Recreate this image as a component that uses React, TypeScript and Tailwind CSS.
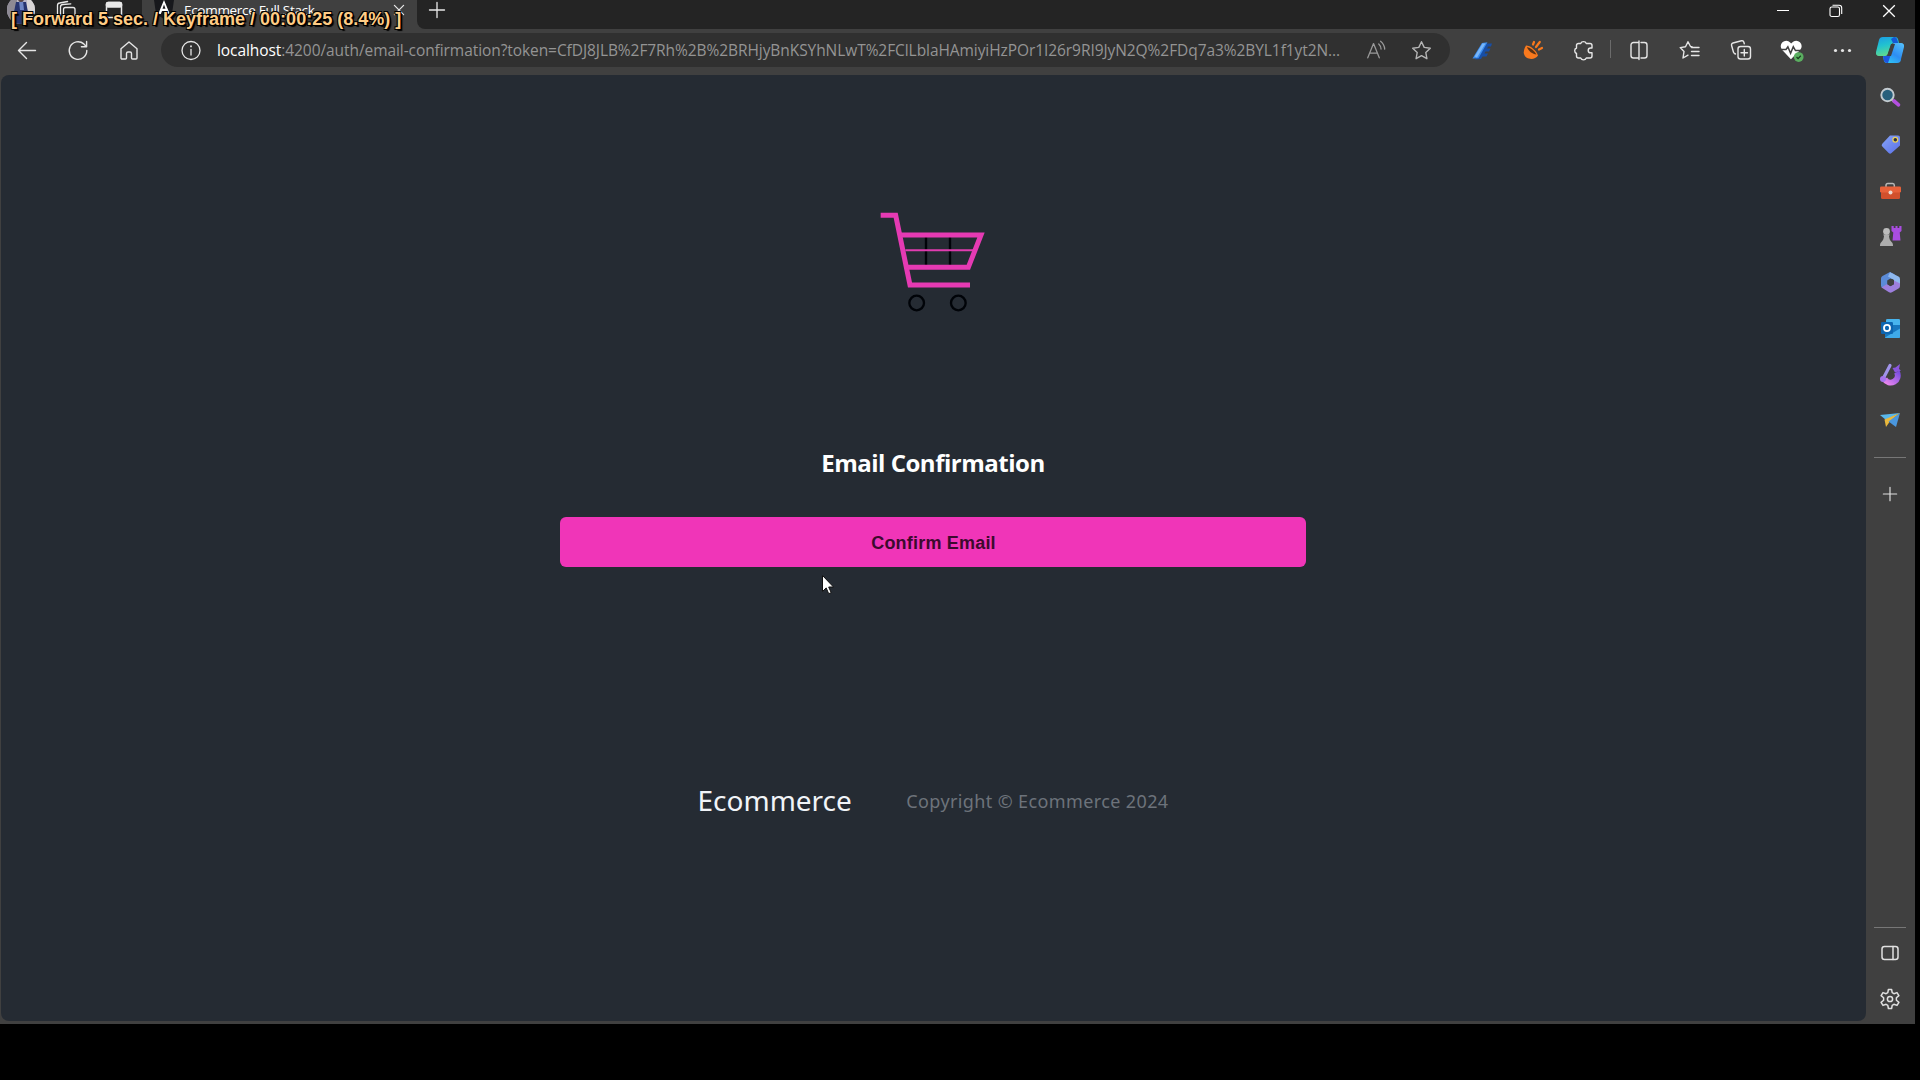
import React from "react";

type IconProps = { size?: number; className?: string; width?: number; children: React.ReactNode };

const Icon = ({ size = 24, className = "", width = 1.4, children }: IconProps) => (
  <svg
    width={size}
    height={size}
    viewBox="0 0 24 24"
    fill="none"
    stroke="currentColor"
    strokeWidth={width}
    strokeLinecap="round"
    strokeLinejoin="round"
    className={"shrink-0 " + className}
  >
    {children}
  </svg>
);

const Avatar = () => (
  <svg width="28" height="28" viewBox="0 0 28 28" className="shrink-0">
    <defs>
      <clipPath id="avatar">
        <circle cx="14" cy="14" r="14" />
      </clipPath>
    </defs>
    <g clipPath="url(#avatar)">
      <rect width="28" height="28" fill="#b9b6c6" />
      <rect width="10" height="28" fill="#8e8a94" />
      <rect x="20" width="8" height="28" fill="#d9d6d6" />
      <path d="M9 6h10l2 10-2 12H9L7 16z" fill="#27346f" />
      <path d="M12 5h4l1 9h-4z" fill="#6f86c4" />
      <circle cx="14" cy="3" r="3" fill="#5a4540" />
    </g>
  </svg>
);

const TabStrip = () => (
  <div className="flex h-[29px] shrink-0 bg-[#404040] text-[#e8e8e8]">
    <div className="flex w-[142px] rounded-br-lg bg-[#242424]">
      <div className="-mt-[4px] ml-[7px]">
        <Avatar />
      </div>
      <Icon className="-mt-[2px] ml-[19px]" width={1.3}>
        <path d="M9.500 20V11.500a2 2 0 0 1 2-2H19a2 2 0 0 1 2 2V20" />
        <path d="M6.500 18V9a2.500 2.500 0 0 1 2.300-2.500l8-.7" />
        <path d="M3.500 16V7.500A2.500 2.500 0 0 1 5.600 5l8-1.500" />
      </Icon>
      <Icon className="-mt-[2px] ml-[24px]" width={1.5}>
        <rect x="4.500" y="4.500" width="15" height="15" rx="2" />
        <rect x="4.500" y="4.500" width="15" height="4.500" rx="1.500" fill="currentColor" />
      </Icon>
    </div>
    <div className="flex h-[29px] w-[275px] bg-[#404040]">
      <svg width="20" height="22" viewBox="0 0 20 22" className="-mt-[3px] ml-[12px] shrink-0">
        <path d="M0 3 10 0l10 3-2 14-8 5-8-5z" fill="#17181c" />
        <path d="M10 3 4.200 17h2.600l1.200-3h4l1.200 3h2.600zM10 7.500l1.500 4.300h-3z" fill="#fff" fillRule="evenodd" />
      </svg>
      <span className="ml-[10px] w-[190px] whitespace-nowrap font-['Open_Sans',sans-serif] text-[13.5px] leading-[21px] tracking-[-0.3px] text-white">
        Ecommerce Full Stack
      </span>
      <Icon size={20} className="ml-[15px]" width={1.5}>
        <path d="m6.500 6.500 11 11m0-11-11 11" />
      </Icon>
    </div>
    <div className="flex flex-1 rounded-bl-lg bg-[#242424]">
      <Icon size={20} className="ml-[10px]" width={1.6}>
        <path d="M12 3v18M3 12h18" />
      </Icon>
      <div className="ml-auto flex w-[159px] text-white">
        <span className="flex h-[21px] w-[53px] items-center justify-center">
          <span className="h-px w-[12px] bg-white" />
        </span>
        <span className="flex h-[21px] w-[53px] items-center justify-center">
          <svg width="14" height="14" viewBox="0 0 14 14" fill="none" stroke="currentColor" strokeWidth="1.100">
            <rect x="1" y="3" width="9.500" height="9.500" rx="1.800" />
            <path d="M3.500 1.200h6.500a2.700 2.700 0 0 1 2.700 2.700v6" />
          </svg>
        </span>
        <span className="flex h-[21px] w-[53px] items-center justify-center">
          <svg width="14" height="14" viewBox="0 0 14 14" stroke="currentColor" strokeWidth="1.300">
            <path d="m1.200 1.200 11.600 11.600M12.800 1.200 1.200 12.800" />
          </svg>
        </span>
      </div>
    </div>
  </div>
);

const Cell = ({ children }: { children: React.ReactNode }) => (
  <div className="flex w-[51px] shrink-0 items-center justify-center">{children}</div>
);

const Toolbar = () => (
  <div className="flex h-[46px] shrink-0 items-center bg-[#404040] pb-[4px] pl-px text-[#e6e6e6]">
    <Cell>
      <Icon>
        <path d="M20.500 12.500H3.500M11.500 4.500 3.500 12.500l8 8" />
      </Icon>
    </Cell>
    <Cell>
      <Icon>
        <path d="M20.800 12.500a8.800 8.800 0 1 1-3-6.600l2.400 2.600M20.600 3.500v5.200h-5.200" />
      </Icon>
    </Cell>
    <Cell>
      <Icon>
        <path d="M4 10.700 12 4l8 6.700v9.300a1 1 0 0 1-1 1h-3.500a1 1 0 0 1-1-1V15.500a1.500 1.500 0 0 0-1.500-1.500h-2A1.500 1.500 0 0 0 9.500 15.500v4.500a1 1 0 0 1-1 1H5a1 1 0 0 1-1-1z" />
      </Icon>
    </Cell>
    <div className="ml-[7px] flex h-[34px] w-[1289px] shrink-0 items-center rounded-full bg-[#303030]">
      <Icon className="ml-[18px]" width={1.3}>
        <circle cx="12" cy="12.500" r="9" />
        <path d="M12 11.500v5.500" />
        <path d="M12 8.200v.2" strokeWidth="1.800" />
      </Icon>
      <div className="ml-[14px] w-[1140px] pt-[2px] whitespace-nowrap font-['Open_Sans',sans-serif] text-[15.5px] tracking-[-0.072px] text-[#949494]">
        <span className="text-white">localhost</span>
        :4200/auth/email-confirmation?token=CfDJ8JLB%2F7Rh%2B%2BRHjyBnKSYhNLwT%2FClLblaHAmiyiHzPOr1I26r9RI9JyN2Q%2FDq7a3%2BYL1f1yt2N...
      </div>
      <Icon size={22} className="ml-[8px] text-[#999]" width={1.4}>
        <path d="M3 20.500 9.300 5l6.300 15.500M5.200 15.500h8.200M15 5.500a8 8 0 0 1 2.500 5.500M17 2.500A12 12 0 0 1 21.500 11" />
      </Icon>
      <Icon className="ml-[22px] text-[#b5b5b5]">
        <path d="m12.500 3.700 2.700 5.700 6.100.8-4.500 4.300 1.100 6.200-5.400-3-5.400 3 1.100-6.200-4.500-4.300 6.100-.8z" />
      </Icon>
    </div>
    <div className="ml-[6px] flex">
      <Cell>
        <svg width="24" height="24" viewBox="0 0 24 24" className="shrink-0">
          <path d="m5 21.500 6-.5 1.500-2.500h4l1.500-3h-3.500l1-2h3.500l1.500-3H17l1-2h3l1-3h-6z" fill="#174ea6" />
          <path d="m2.500 20.500 9.500-15.500 5.500-.8-9 16z" fill="#3a8df0" />
          <path d="m4.500 18.500 8-13h3L7 19.500z" fill="#79b6f8" />
        </svg>
      </Cell>
      <Cell>
        <svg width="24" height="24" viewBox="0 0 24 24" className="shrink-0">
          <path d="M5 7.500c4.500 0 10.500 5 12 10-3 5-12.500 4.500-14-1.500-.7-3 .5-6 2-8.500z" fill="#f9791d" />
          <path d="M6 9c4 1 7.500 4 9.500 7.500-4-.3-8.300-3.500-9.500-7.500z" fill="#5b3214" />
          <path d="m12 6.500 1-2.500M15 9l3.800-5M18 11.500l3-1.500" stroke="#f9791d" strokeWidth="2.200" strokeLinecap="round" />
        </svg>
      </Cell>
      <Cell>
        <Icon>
          <path d="M6.500 5.500h2.200a3 3 0 0 1 5.600 0H18a2 2 0 0 1 2 2V10h-1.400a2.400 2.400 0 0 0 0 4.800H20v3.200a2 2 0 0 1-2 2h-3.700a3 3 0 0 1-5.600 0H6.500a2 2 0 0 1-2-2v-2.500a3 3 0 0 1 0-5.500V7.500a2 2 0 0 1 2-2z" />
        </Icon>
      </Cell>
      <div className="my-[3px] ml-px h-[18px] w-px bg-[#6b6b6b]" />
      <div className="ml-[2px] flex">
        <Cell>
          <Icon>
            <path d="M10 4.500H6.500A2.500 2.500 0 0 0 4 7v10.500A2.500 2.500 0 0 0 6.500 20H10M14 4.500h3.500A2.500 2.500 0 0 1 20 7v10.500a2.500 2.500 0 0 1-2.500 2.500H14M10 4.500h1.500M10 20h1.500M12 3v18.500" />
          </Icon>
        </Cell>
        <Cell>
          <Icon>
            <path d="M14 8.800 12.500 8.500 10 3.700 7.500 8.800l-5.300.8L6 13.500l-1 6.500 5-2.800M13.500 9.500H21M13.500 13.500H21M13.500 17.500H21" />
          </Icon>
        </Cell>
        <Cell>
          <Icon>
            <rect x="9" y="8.500" width="12.500" height="12.500" rx="2.500" />
            <path d="M15.300 11.500v6.500M12 14.800h6.500M6.500 16l-1-.5a2 2 0 0 1-1-1.300L2.600 7.500A2 2 0 0 1 4 5l8.500-2.200a2 2 0 0 1 2.400 1.400l.4 1.500" />
          </Icon>
        </Cell>
        <Cell>
          <svg width="26" height="26" viewBox="0 0 24 24" className="shrink-0">
            <path d="M11 20.500 3 12A5 5 0 0 1 10.300 5l.9 1 1-1A5 5 0 0 1 19.500 12z" fill="#fff" />
            <path d="M1.500 11.500h5l1.700-2.500 2.500 6 2.500-6 2 3.500h5.300" fill="none" stroke="#404040" strokeWidth="1.400" />
            <circle cx="18.200" cy="18.500" r="4.500" fill="#5aae60" />
            <path d="m16.200 18.500 1.400 1.400 2.500-2.600" fill="none" stroke="#173a1b" strokeWidth="1.100" />
          </svg>
        </Cell>
        <Cell>
          <Icon width={0}>
            <g fill="currentColor">
              <circle cx="4.500" cy="12.500" r="1.600" />
              <circle cx="11.500" cy="12.500" r="1.600" />
              <circle cx="18.500" cy="12.500" r="1.600" />
            </g>
          </Icon>
        </Cell>
      </div>
      <svg width="28" height="28" viewBox="0 0 28 28" className="-mt-px -mb-[3px] ml-[8px] shrink-0">
        <defs>
          <linearGradient id="cpa" x1="0" y1="0" x2="0.3" y2="1">
            <stop offset="0" stopColor="#1b9be6" />
            <stop offset="0.500" stopColor="#22c3cf" />
            <stop offset="1" stopColor="#5fd890" />
          </linearGradient>
          <linearGradient id="cpb" x1="1" y1="0" x2="0.300" y2="1">
            <stop offset="0" stopColor="#56c3fb" />
            <stop offset="0.600" stopColor="#2d8df3" />
            <stop offset="1" stopColor="#2fc4f5" />
          </linearGradient>
        </defs>
        <path d="M7 1h12a3 3 0 0 1 3 2l1 4h-5a3 3 0 0 0-3 2l-3 9a3 3 0 0 1-3 2H3a3 3 0 0 1-3-4L3 4a4 4 0 0 1 4-3z" fill="url(#cpa)" />
        <path d="M18 1a3 3 0 0 1 3 2l1.300 4H17l-2-4z" fill="#1559d6" />
        <path d="M21 27H11a3 3 0 0 1-3-2l-1-5h3a3 3 0 0 0 3-2l3-9a3 3 0 0 1 3-2h6a3 3 0 0 1 3 4l-3 12a4 4 0 0 1-4 4z" fill="url(#cpb)" />
        <path d="M12 27a4 4 0 0 1-4-2l-1-5h3l3-2h2z" fill="#1d55e0" />
        <path d="M15 8h4l-4 12h-4z" fill="#404040" />
      </svg>
    </div>
  </div>
);

const sidebarIcons: React.ReactNode[] = [
  <>
    <path d="m13.500 13.500 2.500 2.500" stroke="#b5b5b5" strokeWidth="2" />
    <path d="m16 15 4.500 3.800" stroke="#b44fe0" strokeWidth="3.600" strokeLinecap="round" />
    <circle cx="9.500" cy="9" r="6.200" fill="#28607c" stroke="#c3cbd0" strokeWidth="1.900" />
  </>,
  <>
    <path d="M12 3.500h8a2 2 0 0 1 2 2v8L13.500 21a2 2 0 0 1-2.800 0L4.300 14.500a2 2 0 0 1 0-2.800z" fill="url(#tag)" />
    <circle cx="17.300" cy="7.800" r="2.400" fill="#2b2f45" stroke="#e9cf5a" strokeWidth="1.300" />
  </>,
  <>
    <path d="M8 9V7.200A1.700 1.700 0 0 1 9.700 5.500h5A1.700 1.700 0 0 1 16.300 7.200V9" fill="none" stroke="#b8b8b8" strokeWidth="1.500" />
    <rect x="3" y="13" width="19" height="8" rx="1.500" fill="#d2502c" />
    <rect x="2" y="8.500" width="21" height="6" rx="1.300" fill="#e8613a" />
    <circle cx="12.500" cy="14.500" r="2" fill="#ecd9d0" />
  </>,
  <>
    <path d="M13.500 2h2.200v2h1.800V2h2v2h1.800V2h2.200v5l-1.800 1.500.8 8h-8l.8-8L13.500 7z" fill="#a94de0" />
    <circle cx="8.500" cy="7.500" r="3.400" fill="#bcbcbc" />
    <path d="M5 10.500h7L11 12c.3 3 1 4.500 3 6.500.6.600 1 1.500 1 3.500H2c0-2 .4-2.900 1-3.500 2-2 2.700-3.500 3-6.500z" fill="#adadad" />
  </>,
  <>
    <path d="m12 2 4.500 2.300V8l-6 2v5L4 18l-1-2V8.500A3 3 0 0 1 4.500 6z" fill="#5b8bd8" />
    <path d="M12 2.300 20.500 6.600A3 3 0 0 1 22 9.200v6.500l-6-3V10l-6-3.500z" fill="#8fb8ee" />
    <path d="M22 13.500V16a3 3 0 0 1-1.500 2.600l-6.500 3.700a3 3 0 0 1-3 0L3.500 17.500 9 14l3.500 2 3.500-2v-3.500z" fill="#9d7fdd" />
    <path d="m12.500 8.500 3.500 2v3.700l-3.500 2-3.300-2v-3.700z" fill="#404040" />
  </>,
  <>
    <rect x="8" y="3" width="14" height="12" rx="1.300" fill="#47b4ee" />
    <path d="M15 9h7v12a1 1 0 0 1-1 1H8l-1-1V13z" fill="#1676be" />
    <path d="m7 21.500 15-9V21a1 1 0 0 1-1 1H7z" fill="#3fa9e8" />
    <rect x="3" y="6" width="12" height="12" rx="1.200" fill="#0d65b0" />
    <ellipse cx="9" cy="12" rx="3" ry="3.200" fill="none" stroke="#fff" strokeWidth="1.800" />
  </>,
  <>
    <path d="M18.800 10a6.500 6.500 0 0 1-12.300 7" fill="none" stroke="url(#designer)" strokeWidth="6" />
    <path d="m6 15 6-11.500" stroke="#a093ea" strokeWidth="3.200" strokeLinecap="round" />
    <path d="m14.500 6 3-.5L22 2l-1 5 2 1.500-6 2z" fill="#8a55de" />
    <circle cx="5" cy="17" r="3" fill="#a674ee" />
  </>,
  <>
    <path d="M22 5 2 7 8 12z" fill="#59b7ea" />
    <path d="M22 5 6.500 11.500 8 19l3.500-5z" fill="#e9b83c" />
    <path d="M22 5 10.500 13.500 18 19z" fill="#4a97de" />
  </>,
];

const Sidebar = () => (
  <aside className="flex w-[49px] shrink-0 flex-col items-center bg-[#404040] pr-px text-[#e0e0e0]">
    <svg width="0" height="0" className="absolute">
      <defs>
        <linearGradient id="tag" x1="0" y1="0" x2="1" y2="1">
          <stop offset="0" stopColor="#86a5f7" />
          <stop offset="1" stopColor="#5a6fe8" />
        </linearGradient>
        <linearGradient id="designer" x1="1" y1="0" x2="0" y2="1">
          <stop offset="0" stopColor="#7d4fe0" />
          <stop offset="1" stopColor="#ea86ee" />
        </linearGradient>
      </defs>
    </svg>
    {sidebarIcons.map((icon, i) => (
      <div key={i} className="flex h-[46px] w-full items-center justify-center">
        <svg width="24" height="24" viewBox="0 0 24 24">
          {icon}
        </svg>
      </div>
    ))}
    <div className="mt-[14px] h-px w-[32px] shrink-0 bg-[#777]" />
    <Icon size={20} className="mt-[26px]">
      <path d="M12 4v16M4 12h16" />
    </Icon>
    <div className="mt-auto h-px w-[32px] shrink-0 bg-[#777]" />
    <Icon className="mt-[13px]" width={1.5}>
      <rect x="4" y="5.500" width="16" height="13" rx="2.500" />
      <path d="M15 5.500v13" />
    </Icon>
    <Icon className="mt-[22px] mb-[13px]" width={1.5}>
      <path d="M10.400 2.500h3.200l.6 3.200 1.700 1 3.100-1.100 1.900 3-2.500 2.100v2.600l2.500 2.100-1.900 3-3.100-1.100-1.700 1-.6 3.200h-3.200l-.6-3.200-1.700-1-3.100 1.100-1.900-3 2.500-2.100v-2.600l-2.500-2.100 1.900-3 3.100 1.100 1.700-1z" />
      <circle cx="12" cy="12" r="2.600" />
    </Icon>
  </aside>
);

const Cart = () => (
  <svg width="105" height="100" viewBox="60 65 315 300" fill="none" className="mr-[2px]">
    <g stroke="#000308" strokeWidth="7">
      <path d="M198 139v88M270 139v88" />
      <circle cx="170" cy="338" r="22" />
      <circle cx="295" cy="338" r="22" />
    </g>
    <path d="M136 180h206" stroke="#e03cb0" strokeWidth="6" />
    <g stroke="#e53ab3" strokeWidth="15">
      <path d="M62 75h45l43 209h180" />
      <path d="M122 134h241l-38 97H144" />
    </g>
  </svg>
);

const Page = () => (
  <main className="mb-[3px] ml-px flex flex-1 flex-col items-center rounded-lg bg-[#252b33] pt-[137px] pr-px font-['Noto_Sans',sans-serif]">
    <Cart />
    <h1 className="mt-[135px] font-['Open_Sans',sans-serif] text-[24px] leading-[32px] font-bold tracking-[-0.48px] text-white">
      Email Confirmation
    </h1>
    <button className="mt-[38px] h-[50px] w-[746px] rounded-md bg-[#f035b8] pt-[2px] pl-px font-['Liberation_Sans',sans-serif] text-[18px] font-bold tracking-[0.2px] text-[#3c0a2e]">
      Confirm Email
    </button>
    <footer className="mt-[215px] flex w-[471px] items-center justify-between leading-[36px] whitespace-nowrap">
      <span className="pb-[2px] text-[28px] text-[#f1f4f8]">Ecommerce</span>
      <span className="text-[18px] tracking-[0.38px] text-[#6d737b]">Copyright © Ecommerce 2024</span>
    </footer>
  </main>
);

export default function App() {
  return (
    <div className="relative h-[1080px] w-[1920px] overflow-hidden bg-black">
      <div className="flex h-[1024px] w-[1915px] flex-col bg-[#404040]">
        <TabStrip />
        <Toolbar />
        <div className="flex min-h-0 flex-1">
          <Page />
          <Sidebar />
        </div>
      </div>
      <div className="absolute top-[8px] left-[11px] font-['Liberation_Sans',sans-serif] text-[18px] leading-[22px] font-bold whitespace-nowrap text-[#ffcc85] [text-shadow:-1px_-1px_0_#000,1px_-1px_0_#000,-1px_1px_0_#000,1px_1px_0_#000,0_1px_0_#000,2px_2px_1px_#000]">
        [ Forward 5 sec. / Keyframe / 00:00:25 (8.4%) ]
      </div>
      <svg className="absolute top-[574px] left-[821px]" width="14" height="22" viewBox="0 0 14 22">
        <path d="M1.500 1.500v16l3.700-3.600 2.500 5.800 2.500-1-2.500-5.700h4.800z" fill="#fff" stroke="#111" strokeWidth="1" />
      </svg>
    </div>
  );
}
